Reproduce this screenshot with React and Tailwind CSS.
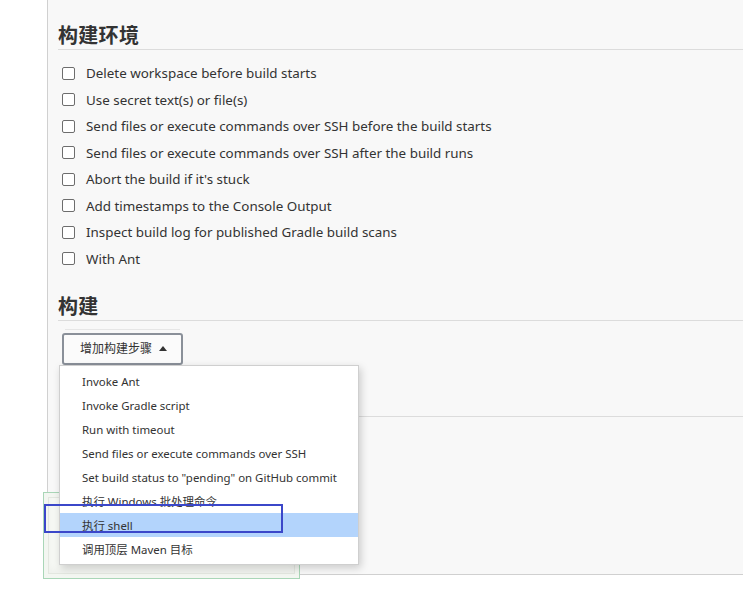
import React from "react";

const font = { fontFamily: '"Noto Sans", "Noto Sans CJK SC", sans-serif' };

const envItems = [
  "Delete workspace before build starts",
  "Use secret text(s) or file(s)",
  "Send files or execute commands over SSH before the build starts",
  "Send files or execute commands over SSH after the build runs",
  "Abort the build if it's stuck",
  "Add timestamps to the Console Output",
  "Inspect build log for published Gradle build scans",
  "With Ant",
];

const menuItems = [
  "Invoke Ant",
  "Invoke Gradle script",
  "Run with timeout",
  "Send files or execute commands over SSH",
  'Set build status to "pending" on GitHub commit',
  "执行 Windows 批处理命令",
  "执行 shell",
  "调用顶层 Maven 目标",
];

export default function App() {
  return (
    <div
      className="relative w-[743px] h-[611px] overflow-hidden bg-white text-[#333]"
      style={font}
    >
      <div className="ml-[47px] h-[575px] border-l border-b border-[#d0d0d0] bg-[#f8f8f8] pl-[10px]">
        <div className="pt-[22px]">
          <div className="h-[28px] leading-[27px] border-b border-[#dcdcdc] text-[20px] font-bold text-[#333] tracking-[0.3px]">
            构建环境
          </div>
        </div>
        <div className="mt-[10px] flex flex-col">
          {envItems.map((t) => (
            <div key={t} className="flex h-[26.5px] items-center">
              <span className="ml-[4px] h-[13px] w-[13px] shrink-0 rounded-[2px] border border-[#6d6d6d] bg-white" />
              <span className="ml-[11px] text-[13.4px] text-[#333]">{t}</span>
            </div>
          ))}
        </div>
        <div className="mt-[21px] h-[28px] leading-[27px] border-b border-[#dcdcdc] text-[20px] font-bold text-[#333] tracking-[0.3px]">
          构建
        </div>
        <div className="mt-[8px] ml-[7px] h-px w-[115px] bg-[#e6e6e6]" />
        <div className="relative mt-[3px] ml-[4px] inline-block">
          <div className="flex h-[32px] w-[121px] items-center justify-center gap-[7px] rounded-[3px] border-2 border-[#8a9099] bg-[#fbfbfb] pl-[2px] text-[12px] text-[#333]">
            <span>增加构建步骤</span>
            <svg width="8" height="5" viewBox="0 0 8 5" className="mt-[-1px]">
              <path d="M0 5 L4 0 L8 5 Z" fill="#333" />
            </svg>
          </div>
          <div className="absolute left-[-3px] top-[32px] z-20 w-[300px] border border-[#cfcfcf] bg-white pt-[3px] pb-[3px] shadow-[2px_3px_8px_rgba(0,0,0,0.18)]">
            {menuItems.map((t, i) => (
              <div
                key={t}
                className={
                  "flex h-[24px] items-center pl-[22px] pt-[2px] text-[11.45px] text-[#333] " +
                  (i === 6 ? "bg-[#b3d4fc]" : "")
                }
              >
                {t}
              </div>
            ))}
          </div>
        </div>
        <div className="mt-[51px] ml-[7px] h-px bg-[#dcdcdc]" />
      </div>

      <div className="absolute left-[43px] top-[492px] z-10 h-[87px] w-[257px] border border-[#a9d6b7] bg-[#f3f6f1] p-[4px]">
        <div className="h-full w-full border border-[#e3e7e0] bg-[#f6f8f4] shadow-[inset_0_-4px_6px_rgba(0,0,0,0.03)]" />
      </div>

      <div className="absolute left-[44px] top-[504px] z-30 h-[29px] w-[239px] border-2 border-[#3b47c9]" />
    </div>
  );
}
